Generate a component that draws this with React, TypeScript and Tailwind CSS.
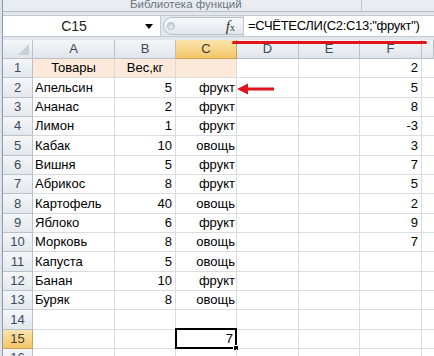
import React from 'react';

const COLS = ['A', 'B', 'C', 'D', 'E', 'F', ''];

// [A, B, C, F]
const ROWS: [string, string, string, string][] = [
  ['Товары', 'Вес,кг', '', '2'],
  ['Апельсин', '5', 'фрукт', '5'],
  ['Ананас', '2', 'фрукт', '8'],
  ['Лимон', '1', 'фрукт', '-3'],
  ['Кабак', '10', 'овощь', '3'],
  ['Вишня', '5', 'фрукт', '7'],
  ['Абрикос', '8', 'фрукт', '5'],
  ['Картофель', '40', 'овощь', '2'],
  ['Яблоко', '6', 'фрукт', '9'],
  ['Морковь', '8', 'овощь', '7'],
  ['Капуста', '5', 'овощь', ''],
  ['Банан', '10', 'фрукт', ''],
  ['Буряк', '8', 'овощь', ''],
  ['', '', '', ''],
  ['', '', '', ''],
  ['', '', '', ''],
];

const colHead = [
  'w-[82px]',
  'w-[61px]',
  'w-[61px]',
  'w-[62px]',
  'w-[61px]',
  'w-[62px]',
  'flex-1',
];

function HeaderRow() {
  return (
    <div className="flex h-[19px] shrink-0">
      <div className="w-[30px] border-r border-b border-[#b9c1cb] bg-gradient-to-b from-[#f4f6f8] to-[#e1e5ea] relative">
        <div className="absolute right-[3px] bottom-[3px] w-0 h-0 border-l-[11px] border-l-transparent border-b-[11px] border-b-[#c9cfd6]" />
      </div>
      {COLS.map((c, i) => (
        <div
          key={i}
          className={`${colHead[i]} flex items-center justify-center border-r border-b text-[13px] ${
            c === 'C'
              ? 'bg-gradient-to-b from-[#fbe4ad] to-[#f3c665] border-[#c9a45a] text-[#3b3b3b]'
              : 'bg-gradient-to-b from-[#f4f6f8] to-[#e1e5ea] border-[#b9c1cb] text-[#3b4a5c]'
          }`}
        >
          {c}
        </div>
      ))}
    </div>
  );
}

function DataRow({ n, r }: { n: number; r: [string, string, string, string] }) {
  const head = n === 1;
  const sel = n === 15;
  return (
    <div className="flex h-[19.33px] shrink-0">
      <div
        className={`w-[30px] flex items-center justify-center border-r border-b text-[13px] ${
          sel
            ? 'bg-gradient-to-b from-[#fbe4ad] to-[#f3c665] border-[#c9a45a] text-[#3b3b3b]'
            : 'bg-gradient-to-b from-[#f4f6f8] to-[#e4e8ec] border-[#b9c1cb] text-[#3b4a5c]'
        }`}
      >
        {n}
      </div>
      <div
        className={`w-[82px] flex items-center border-r border-b border-[#dadcdd] text-[13px] ${
          head ? 'bg-[#fde9d9] justify-center' : 'pl-[2px]'
        }`}
      >
        {r[0]}
      </div>
      <div
        className={`w-[61px] flex items-center border-r border-b border-[#dadcdd] text-[13px] ${
          head ? 'bg-[#fde9d9] justify-center' : 'justify-end pr-[3px]'
        }`}
      >
        {r[1]}
      </div>
      <div
        className={`w-[61px] relative flex items-center justify-end pr-[1px] border-r border-b border-[#dadcdd] text-[13px] ${
          head ? 'bg-[#fde9d9]' : ''
        }`}
      >
        {sel ? <span className="pr-[2px]">7</span> : r[2]}
        {sel && (
          <>
            <div className="absolute -left-[1px] -top-[2px] -right-[1px] -bottom-[1px] border-2 border-black" />
            <div className="absolute -right-[3px] -bottom-[3px] w-[6px] h-[6px] bg-black border border-white" />
          </>
        )}
      </div>
      <div className="w-[62px] border-r border-b border-[#dadcdd]" />
      <div className="w-[61px] border-r border-b border-[#dadcdd]" />
      <div className="w-[62px] flex items-center justify-end pr-[3px] border-r border-b border-[#dadcdd] text-[13px]">
        {r[3]}
      </div>
      <div className="flex-1 border-b border-[#dadcdd]" />
    </div>
  );
}

export default function App() {
  return (
    <div className="w-[434px] h-[356px] overflow-hidden bg-white flex font-['Liberation_Sans',sans-serif] text-black">
      {/* left window edge */}
      <div className="w-[2px] bg-[#dde3ea] shrink-0" />
      <div className="w-px bg-[#8d9bad] shrink-0" />

      <div className="flex-1 flex flex-col relative">
        {/* Ribbon group label */}
        <div className="h-[11px] flex bg-[#e9edf1] overflow-hidden shrink-0">
          <div className="w-[359px] border-r border-[#c3c9d1] pl-[127px]">
            <span className="block text-[11.5px] leading-[11px] -mt-px text-[#6b7480] whitespace-nowrap">
              Библиотека функций
            </span>
          </div>
          <div className="flex-1" />
        </div>
        <div className="h-px bg-[#b5bcc6] shrink-0" />
        <div className="h-[3px] bg-[#e3e7ec] shrink-0" />

        {/* Formula bar */}
        <div className="h-[22px] flex border-y border-[#c2c9d2] bg-[#e3e8ed] shrink-0">
          <div className="w-[158px] bg-white flex items-center border-r border-[#c2c9d2]">
            <div className="w-[142px] text-center text-[14px] text-[#222]">C15</div>
            <div className="w-0 h-0 border-l-[4px] border-r-[4px] border-t-[5px] border-l-transparent border-r-transparent border-t-black" />
          </div>
          <div className="w-[82px] flex items-center pl-[2px]">
            <div className="h-[18px] flex-1 flex items-center rounded-l-full border border-r-0 border-[#b8c0ca] bg-gradient-to-b from-[#f7f9fb] to-[#e2e7ec]">
              <div className="ml-[3px] w-[8px] h-[8px] rounded-full bg-gradient-to-b from-[#c9cfd6] to-[#eef1f4] border border-[#b5bcc6]" />
              <div className="flex-1" />
              <span className="mr-[8px] font-['Liberation_Serif',serif] italic text-[15px] leading-none text-[#333]">
                f<span className="text-[10px] not-italic font-['Liberation_Serif',serif]">x</span>
              </span>
            </div>
          </div>
          <div className="flex-1 bg-white border-l border-[#c2c9d2] flex items-center pl-[4px] text-[13px] tracking-[-0.3px] whitespace-nowrap overflow-hidden">
            =СЧЁТЕСЛИ(C2:C13;"фрукт")
          </div>
        </div>
        <div className="h-[3px] bg-[#e3e7ec] shrink-0" />

        {/* Grid */}
        <div className="flex-1 flex flex-col overflow-hidden">
          <HeaderRow />
          {ROWS.map((r, i) => (
            <DataRow key={i} n={i + 1} r={r} />
          ))}
        </div>

        {/* red annotation line under formula */}
        <div className="absolute top-[41px] left-[229px] w-[195px] h-[3px] bg-[#e0141c] rounded-full" />

        {/* red arrow pointing at C2 */}
        <svg className="absolute left-[234px] top-[83px]" width="38" height="12" viewBox="0 0 38 12">
          <polygon points="0,6 11,0.5 11,11.5" fill="#e0141c" />
          <rect x="10" y="4.5" width="27" height="3" fill="#e0141c" />
        </svg>
      </div>
    </div>
  );
}
